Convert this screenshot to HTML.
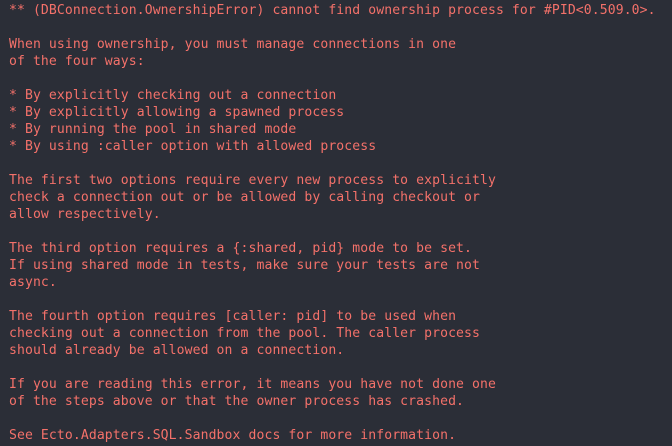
<!DOCTYPE html>
<html><head><style>
html,body{margin:0;padding:0;background:#2b2e37;width:672px;height:446px;overflow:hidden}
pre{margin:0;padding:2px 0 0 9px;font-family:"DejaVu Sans Mono",monospace;font-size:13.1px;letter-spacing:0.1px;line-height:17px;color:#f4716a;white-space:pre}
</style></head><body><pre>** (DBConnection.OwnershipError) cannot find ownership process for #PID&lt;0.509.0&gt;.

When using ownership, you must manage connections in one
of the four ways:

* By explicitly checking out a connection
* By explicitly allowing a spawned process
* By running the pool in shared mode
* By using :caller option with allowed process

The first two options require every new process to explicitly
check a connection out or be allowed by calling checkout or
allow respectively.

The third option requires a {:shared, pid} mode to be set.
If using shared mode in tests, make sure your tests are not
async.

The fourth option requires [caller: pid] to be used when
checking out a connection from the pool. The caller process
should already be allowed on a connection.

If you are reading this error, it means you have not done one
of the steps above or that the owner process has crashed.

See Ecto.Adapters.SQL.Sandbox docs for more information.</pre></body></html>
